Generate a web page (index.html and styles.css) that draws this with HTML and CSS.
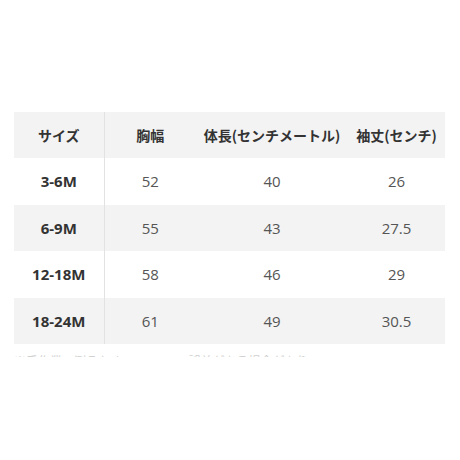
FILE: index.html
```html
<!DOCTYPE html>
<html lang="ja">
<head>
<meta charset="utf-8">
<link rel="stylesheet" href="styles.css">
</head>
<body>
<div class="page">
  <table class="size-table">
    <colgroup>
      <col class="c1"><col class="c2"><col class="c3"><col class="c4">
    </colgroup>
    <thead>
      <tr><th>サイズ</th><th>胸幅</th><th>体長(センチメートル)</th><th>袖丈(センチ)</th></tr>
    </thead>
    <tbody>
      <tr><th>3-6M</th><td>52</td><td>40</td><td>26</td></tr>
      <tr class="alt"><th>6-9M</th><td>55</td><td>43</td><td>27.5</td></tr>
      <tr><th>12-18M</th><td>58</td><td>46</td><td>29</td></tr>
      <tr class="alt"><th>18-24M</th><td>61</td><td>49</td><td>30.5</td></tr>
    </tbody>
  </table>
  <div class="note"><span>※手作業で測るため、1〜3cmの誤差がある場合があります。</span></div>
</div>
</body>
</html>
```
FILE: styles.css
```css
html, body {
  margin: 0;
  padding: 0;
  background: #ffffff;
}
.page {
  padding: 112px 15px 0 14px;
  font-family: "Open Sans", "Noto Sans CJK JP", sans-serif;
}
.size-table {
  border-collapse: collapse;
  table-layout: fixed;
  width: 431px;
}
.c1 { width: 90px; }
.c2 { width: 92px; }
.c3 { width: 152px; }
.c4 { width: 97px; }
.size-table th,
.size-table td {
  height: 46.5px;
  padding: 0;
  text-align: center;
  vertical-align: middle;
  font-size: 14px;
  line-height: 20px;
}
.size-table thead tr {
  background: #f3f3f3;
}
.size-table thead th {
  height: 46px;
  font-weight: 700;
  color: #333333;
  font-family: "Noto Sans CJK JP", sans-serif;
  font-size: 14px;
  white-space: nowrap;
}
.size-table tbody th {
  font-weight: 700;
  color: #333333;
  font-size: 15px;
}
.size-table td {
  color: #555555;
  font-size: 15px;
}
.size-table tr.alt {
  background: #f3f3f3;
}
.size-table th:first-child,
.size-table td:first-child {
  border-right: 1px solid #e2e2e2;
}
.note {
  margin-top: 9px;
  width: 300px;
  height: 4px;
  overflow: hidden;
  font-family: "Noto Sans CJK JP", sans-serif;
  font-size: 12px;
  line-height: 18px;
  color: #d0d0d0;
  white-space: nowrap;
}
.note span {
  display: block;
  margin-top: -1px;
}
```
